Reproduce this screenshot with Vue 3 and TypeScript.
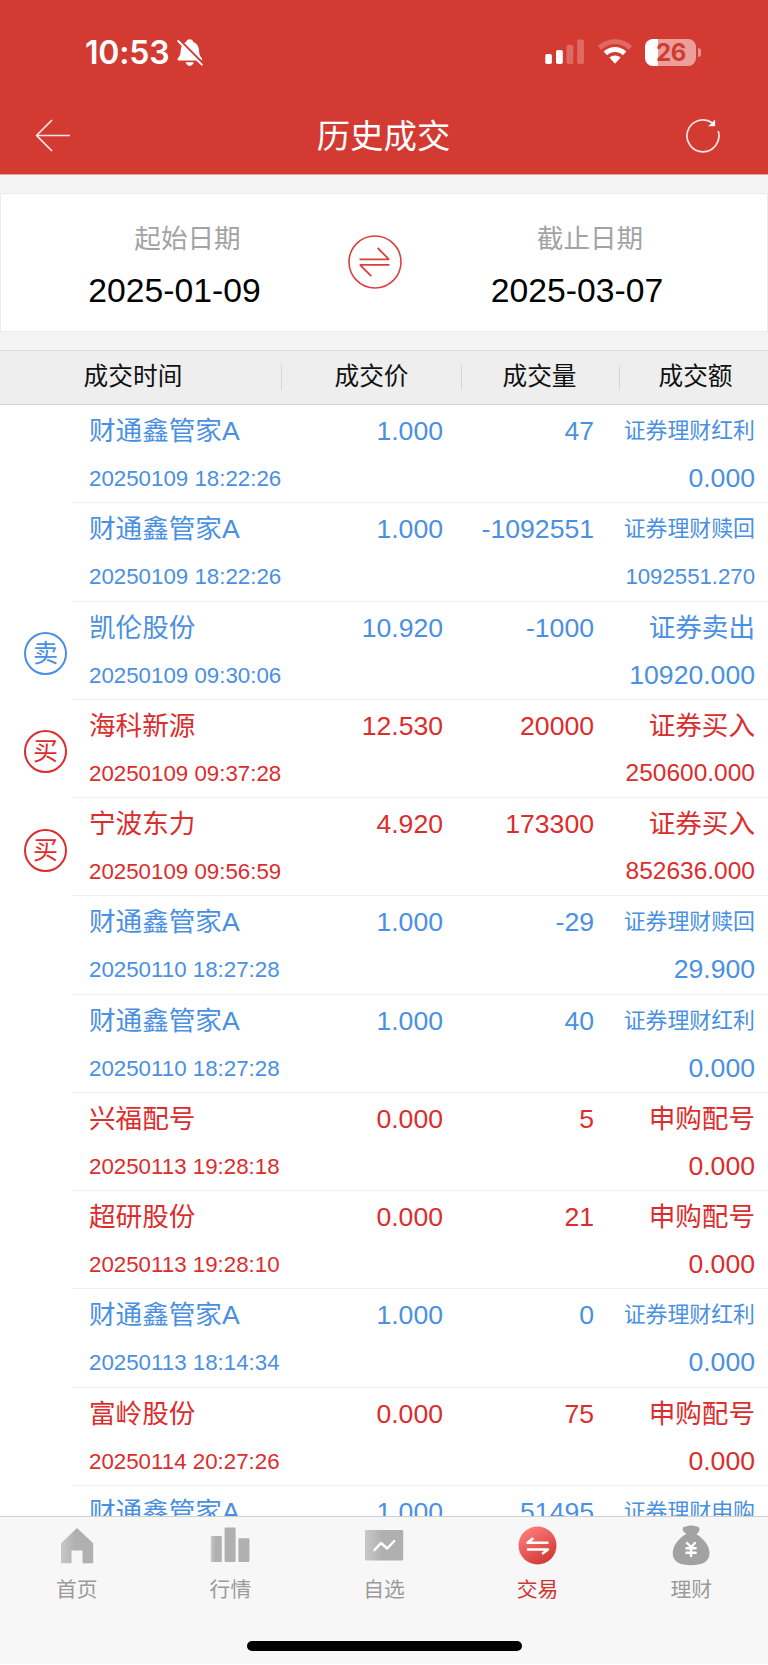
<script setup lang="ts">
interface Deal {
  name: string
  time: string
  price: string
  volume: string
  kind: string
  amount: string
  tone: 'blue' | 'red'
  badge?: string
}

const deals: Deal[] = [
  { name: '财通鑫管家A', time: '20250109 18:22:26', price: '1.000', volume: '47', kind: '证券理财红利', amount: '0.000', tone: 'blue' },
  { name: '财通鑫管家A', time: '20250109 18:22:26', price: '1.000', volume: '-1092551', kind: '证券理财赎回', amount: '1092551.270', tone: 'blue' },
  { name: '凯伦股份', time: '20250109 09:30:06', price: '10.920', volume: '-1000', kind: '证券卖出', amount: '10920.000', tone: 'blue', badge: '卖' },
  { name: '海科新源', time: '20250109 09:37:28', price: '12.530', volume: '20000', kind: '证券买入', amount: '250600.000', tone: 'red', badge: '买' },
  { name: '宁波东力', time: '20250109 09:56:59', price: '4.920', volume: '173300', kind: '证券买入', amount: '852636.000', tone: 'red', badge: '买' },
  { name: '财通鑫管家A', time: '20250110 18:27:28', price: '1.000', volume: '-29', kind: '证券理财赎回', amount: '29.900', tone: 'blue' },
  { name: '财通鑫管家A', time: '20250110 18:27:28', price: '1.000', volume: '40', kind: '证券理财红利', amount: '0.000', tone: 'blue' },
  { name: '兴福配号', time: '20250113 19:28:18', price: '0.000', volume: '5', kind: '申购配号', amount: '0.000', tone: 'red' },
  { name: '超研股份', time: '20250113 19:28:10', price: '0.000', volume: '21', kind: '申购配号', amount: '0.000', tone: 'red' },
  { name: '财通鑫管家A', time: '20250113 18:14:34', price: '1.000', volume: '0', kind: '证券理财红利', amount: '0.000', tone: 'blue' },
  { name: '富岭股份', time: '20250114 20:27:26', price: '0.000', volume: '75', kind: '申购配号', amount: '0.000', tone: 'red' },
  { name: '财通鑫管家A', time: '', price: '1.000', volume: '51495', kind: '证券理财申购', amount: '', tone: 'blue' },
]

const columns = ['成交时间', '成交价', '成交量', '成交额']

// Longer values step down in size so they stay inside the last column.
function amountSize(text: string): string {
  if (text.length > 10) return 'small'
  return text.length === 10 ? 'medium' : ''
}
</script>

<template>
  <div class="screen">
    <header class="top">
      <div class="status">
        <div class="clock">
          <span class="clock-text">10:53</span>
          <svg class="bell" width="26" height="28" viewBox="0 0 26 28">
            <path d="M12.7 0.3c1.9 0 3.2 1.1 3.6 2.6 3.6 1.3 5.5 4.5 5.7 8.4.2 4 .7 5.6 2.7 7.7.7.8.9 2.5-.8 2.5H1.8c-1.5 0-1.6-1.6-.8-2.5 2.1-2.2 2.6-3.7 2.7-7.7C3.9 7.4 5.6 4.3 9.1 2.9 9.5 1.4 10.8.3 12.7.3z" fill="#fff" />
            <path d="M8.7 23.300h8c-.4 2-2 3.600-4 3.600s-3.600-1.600-4-3.600z" fill="#fff" />
            <path d="M2.300.7 26 24.400" stroke="#d33a32" stroke-width="2.200" />
            <path d="M1.200 2 24.800 25.600" stroke="#fff" stroke-width="2" stroke-linecap="round" />
          </svg>
        </div>
        <div class="indicators">
          <svg width="40" height="26" viewBox="0 0 40 26">
            <rect x="0.3" y="15" width="6.6" height="10" rx="1.800" fill="#fff" />
            <rect x="11" y="11" width="6.8" height="14" rx="1.800" fill="#fff" />
            <rect x="21.5" y="5.7" width="6.8" height="19.3" rx="1.800" fill="#df6a63" />
            <rect x="32.2" y="0.5" width="6.8" height="24.5" rx="1.800" fill="#df6a63" />
          </svg>
          <svg width="34" height="26" viewBox="0 0 34 26">
            <path d="M0 7.300C9-2 25-2 34 7.300L30.700 10.700C23 3 11 3 3.300 10.700Z" fill="#df6a63" />
            <path d="M5.600 12.600C12 6.500 22 6.500 28.400 12.600L24.800 16.200C20.500 12 13.500 12 9.200 16.200Z" fill="#fff" />
            <path d="M11.400 18.500C14.500 15.700 19.500 15.700 22.600 18.500L17 24.800Z" fill="#fff" />
          </svg>
          <div class="battery">
            <span class="battery-body">26</span>
            <span class="battery-tip"></span>
          </div>
        </div>
      </div>
      <div class="nav">
        <svg width="36" height="34" viewBox="0 0 36 34">
          <path d="M17 1 1.500 16.500 17 32M1.500 16.500H35" fill="none" stroke="#fff" stroke-opacity=".88" stroke-width="1.700" stroke-linejoin="round" />
        </svg>
        <h1>历史成交</h1>
        <svg width="36" height="36" viewBox="0 0 36 36">
          <path d="M33.200 13A16 16 0 1 1 27.200 4.800" fill="none" stroke="#fff" stroke-opacity=".88" stroke-width="1.700" />
          <path d="M30.100 1.400V8.300H23.200Z" fill="#fff" />
        </svg>
      </div>
    </header>

    <section class="range">
      <div class="date">
        <span class="date-label">起始日期</span>
        <span class="date-value">2025-01-09</span>
      </div>
      <svg class="swap" width="54" height="54" viewBox="0 0 54 54" fill="none" stroke="#d8403c">
        <circle cx="27" cy="27" r="26" stroke-width="1.600" />
        <path d="M11.500 24.400H41L29.700 13M41.500 29.900H12L23.300 41.200" stroke-width="1.800" stroke-linejoin="bevel" />
      </svg>
      <div class="date date-end">
        <span class="date-label">截止日期</span>
        <span class="date-value">2025-03-07</span>
      </div>
    </section>

    <div class="head">
      <span v-for="c in columns" :key="c" class="head-cell">{{ c }}</span>
    </div>

    <main class="list">
      <article v-for="(d, i) in deals" :key="i" class="deal" :class="d.tone">
        <div class="mark"><span v-if="d.badge" class="badge">{{ d.badge }}</span></div>
        <div class="info">
          <div class="cell name">{{ d.name }}</div>
          <div class="cell num">{{ d.price }}</div>
          <div class="cell num">{{ d.volume }}</div>
          <div class="cell num" :class="{ small: d.kind.length > 5 }">{{ d.kind }}</div>
          <div class="cell time">{{ d.time }}</div>
          <div class="cell num low" :class="amountSize(d.amount)">{{ d.amount }}</div>
        </div>
      </article>
    </main>

    <footer class="tabs">
      <nav class="tab-row">
        <div class="tab">
          <svg width="44" height="44" viewBox="0 0 44 44">
            <defs>
              <linearGradient id="fade"><stop offset="0" stop-color="#c8c8c8" /><stop offset=".45" stop-color="#b0b0b0" /></linearGradient>
            </defs>
            <path d="M22 4 38.200 19.300V39.300H27.500V26.500H16.500V39.300H6V19.300Z" fill="url(#fade)" />
          </svg>
          <span>首页</span>
        </div>
        <div class="tab">
          <svg width="44" height="44" viewBox="0 0 44 44">
            <rect x="2.800" y="12" width="11" height="26" rx="1" fill="url(#fade)" />
            <rect x="16.600" y="3.500" width="11" height="34.500" rx="1" fill="#b0b0b0" />
            <rect x="30.400" y="14.300" width="11" height="23.700" rx="1" fill="#b0b0b0" />
          </svg>
          <span>行情</span>
        </div>
        <div class="tab">
          <svg width="44" height="44" viewBox="0 0 44 44">
            <rect x="3" y="6" width="38.200" height="30.500" rx="1" fill="url(#fade)" />
            <path d="M12.500 26 19 19 25.200 24.500 32.200 17" fill="none" stroke="#fff" stroke-width="2.500" stroke-linecap="round" stroke-linejoin="round" />
          </svg>
          <span>自选</span>
        </div>
        <div class="tab active">
          <svg width="44" height="44" viewBox="0 0 44 44">
            <defs>
              <linearGradient id="ember" x1=".2" y1="0" x2=".8" y2="1"><stop offset="0" stop-color="#ff7f7f" /><stop offset="1" stop-color="#ce3530" /></linearGradient>
            </defs>
            <circle cx="21.500" cy="21.500" r="19" fill="url(#ember)" />
            <path d="M31.500 18.700H11.500L16.500 14.900M12 25.500H32L27 29.200" fill="none" stroke="#fff" stroke-width="2.600" stroke-linecap="round" stroke-linejoin="round" />
          </svg>
          <span>交易</span>
        </div>
        <div class="tab">
          <svg width="44" height="44" viewBox="0 0 44 44">
            <path d="M17.300 9.800C15 8.600 13.500 6.800 13.700 4.800 13.900 3.100 15.500 2.300 17.500 2.500 20 1.300 25 1.300 27 2.500 29.200 2.300 30.500 3.500 30.500 5.300 30.400 7.500 28.800 9 27 10.800H17.300Z" fill="#a2a2a2" />
            <path d="M16.700 10.300H27.400C35 15 40.500 22 40.500 29.500 40.500 37.500 33 41.300 22 41.300S3.700 37.500 3.700 29.500C3.700 22 9 15 16.700 10.300Z" fill="#a2a2a2" />
            <path d="M18 19 22 23 26 19M17.500 24.300H26.700M17.500 28.700H26.700M22 23V32" fill="none" stroke="#fff" stroke-width="2.400" stroke-linecap="round" />
          </svg>
          <span>理财</span>
        </div>
      </nav>
      <div class="home-bar"></div>
    </footer>
  </div>
</template>

<style>
html,
body {
  margin: 0;
  background: #fff;
}
</style>

<style scoped>
.screen {
  box-sizing: border-box;
  width: 768px;
  height: 1664px;
  display: flex;
  flex-direction: column;
  overflow: hidden;
  background: #f4f4f4;
  font-family: "Liberation Sans", "Noto Sans CJK SC", sans-serif;
}

.top {
  flex: none;
  height: 175px;
  display: flex;
  flex-direction: column;
  background: #d33a32;
  border-bottom: 1px solid #e1a39f;
  box-sizing: border-box;
}

.status {
  height: 98px;
  display: flex;
  justify-content: space-between;
  align-items: center;
  padding: 6px 67px 0 85px;
  box-sizing: border-box;
}

.clock {
  display: flex;
  align-items: center;
  gap: 7px;
  padding-top: 2px;
}

.clock-text {
  width: 85px;
  color: #fff;
  font: 600 32px/40px Inter, sans-serif;
  letter-spacing: -0.2px;
  white-space: nowrap;
}

.indicators {
  display: flex;
  align-items: center;
  gap: 13px;
}

.battery {
  display: flex;
  align-items: center;
  gap: 2px;
}

.battery-body {
  width: 51px;
  height: 27px;
  border-radius: 8px;
  background: linear-gradient(90deg, #fff 26%, #eb9f9b 26%);
  color: #d33a32;
  font: 700 24px/27px Inter, sans-serif;
  letter-spacing: -0.4px;
  text-indent: 1px;
  text-align: center;
}

.battery-tip {
  width: 3px;
  height: 9px;
  border-radius: 0 5px 5px 0;
  background: #e9918c;
}

.nav {
  height: 75px;
  display: flex;
  justify-content: space-between;
  align-items: center;
  padding: 0 47px 0 35px;
}

.nav h1 {
  margin: 2px 0 0 11px;
  color: #fff;
  font-size: 33.4px;
  font-weight: 400;
  line-height: 48px;
}

.range {
  flex: none;
  height: 139px;
  margin-top: 18px;
  box-sizing: border-box;
  display: grid;
  grid-template-columns: 347px 54px 1fr;
  background: #fff;
  border: 1px solid #ececec;
}

.date {
  display: flex;
  flex-direction: column;
  align-items: center;
  padding-top: 26px;
}

.date-end {
  margin-right: 15px;
}

.date-label {
  margin-left: 26px;
  color: #a3a3a3;
  font-size: 26.6px;
  line-height: 38px;
}

.date-value {
  margin-top: 12px;
  color: #000;
  font-size: 33.7px;
  line-height: 40px;
}

.swap {
  margin-top: 41px;
}

.head {
  flex: none;
  height: 55px;
  margin-top: 18px;
  box-sizing: border-box;
  display: grid;
  grid-template-columns: 282px 180px 158px 148px;
  align-items: center;
  background: #eee;
  border-top: 1px solid #dcdcdc;
  border-bottom: 1px solid #d4d4d4;
}

.head-cell {
  height: 25px;
  border-right: 1px solid #d6d6d6;
  color: #111;
  font-size: 24.7px;
  line-height: 23px;
  text-align: center;
}

.head-cell:first-child {
  padding-right: 15px;
}

.head-cell:nth-child(3) {
  padding-right: 2px;
}

.head-cell:last-child {
  border-right: 0;
  padding-left: 3px;
}

.list {
  flex: 1;
  min-height: 0;
  overflow: hidden;
  background: #fff;
}

.deal {
  height: 98.25px;
  display: flex;
}

.blue {
  color: #4a90e2;
}

.red {
  color: #dc2d2d;
}

.mark {
  flex: none;
  width: 72px;
  display: flex;
  align-items: center;
  padding: 6px 0 0 24px;
  box-sizing: border-box;
}

.badge {
  width: 43px;
  height: 43px;
  box-sizing: border-box;
  border: 2px solid currentColor;
  border-radius: 50%;
  font-size: 25px;
  line-height: 39px;
  text-align: center;
}

.info {
  flex: 1;
  box-sizing: border-box;
  display: grid;
  grid-template-columns: 209px 145px 151px 161px;
  grid-template-rows: 51px 46px;
  padding-left: 17px;
  padding-right: 13px;
  border-bottom: 1px solid #f1f1f1;
}

.cell {
  font-size: 26.6px;
  line-height: 52px;
  white-space: nowrap;
}

.num {
  text-align: right;
}

.time {
  grid-column: 1 / 3;
  font-size: 22.3px;
  line-height: 46px;
}

.low {
  grid-column: 3 / 5;
  line-height: 44px;
}

.medium {
  font-size: 24.5px;
}

.small {
  font-size: 21.9px;
}

.low.small {
  font-size: 22.2px;
  line-height: 46px;
}

.tabs {
  flex: none;
  height: 148px;
  box-sizing: border-box;
  display: flex;
  flex-direction: column;
  align-items: center;
  background: #f7f7f7;
  border-top: 1px solid #cfcfcf;
}

.tab-row {
  width: 100%;
  display: grid;
  grid-template-columns: repeat(5, 1fr);
}

.tab {
  display: flex;
  flex-direction: column;
  align-items: center;
  padding-top: 7px;
  color: #9b9b9b;
  font-size: 20.8px;
  line-height: 30px;
}

.tab span {
  margin-top: 7px;
}

.active {
  color: #cd3530;
}

.home-bar {
  width: 275px;
  height: 10px;
  margin-top: 36px;
  border-radius: 5px;
  background: #000;
}
</style>
